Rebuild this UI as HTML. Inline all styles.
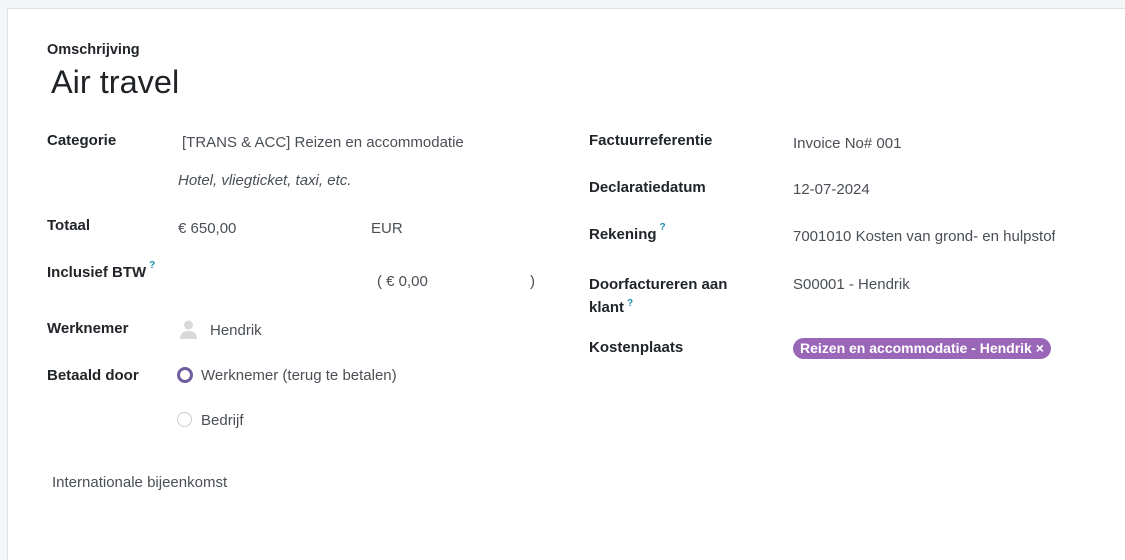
<!DOCTYPE html>
<html><head><meta charset="utf-8"><style>
html,body{margin:0;padding:0;width:1125px;height:560px;overflow:hidden;background:#f4f5f7;font-family:"Liberation Sans",sans-serif;position:relative;}
.card{position:absolute;left:7px;top:8px;width:1117px;height:552px;background:#fff;border-top:1px solid #e0e2e6;border-left:1px solid #e0e2e6;}
.a{position:absolute;white-space:nowrap;font-size:15px;}
.l{font-weight:bold;color:#212529;}
.v{color:#4a4f55;}
.q{color:#1a8fb0;font-size:10px;font-weight:bold;vertical-align:top;position:relative;top:-4px;margin-left:3px}
</style></head><body>
<div class="card"></div>
<div class="a l" style="left:47px;top:42px;font-size:14.5px;">Omschrijving</div>
<div class="a" style="left:51px;top:64px;font-size:32.5px;color:#1f2226;">Air travel</div>

<div class="a l" style="left:47px;top:132px;">Categorie</div>
<div class="a v" style="left:182px;top:134px;">[TRANS &amp; ACC] Reizen en accommodatie</div>
<div class="a v" style="left:178px;top:172px;font-style:italic;">Hotel, vliegticket, taxi, etc.</div>

<div class="a l" style="left:47px;top:217px;">Totaal</div>
<div class="a v" style="left:178px;top:220px;">€ 650,00</div>
<div class="a v" style="left:371px;top:220px;">EUR</div>

<div class="a l" style="left:47px;top:264px;">Inclusief BTW<span class="q">?</span></div>
<div class="a v" style="left:377px;top:273px;">( € 0,00</div>
<div class="a v" style="left:530px;top:273px;">)</div>

<div class="a l" style="left:47px;top:320px;">Werknemer</div>
<svg style="position:absolute;left:178px;top:318px" width="21" height="22" viewBox="0 0 21 22"><circle cx="10.5" cy="7" r="4.5" fill="#d9d9d9"/><path d="M2 21 Q2 13 10.5 13 Q19 13 19 21Z" fill="#d9d9d9"/></svg>
<div class="a v" style="left:210px;top:322px;">Hendrik</div>

<div class="a l" style="left:47px;top:367px;">Betaald door</div>
<div style="position:absolute;left:177px;top:367px;width:10px;height:10px;border:3px solid #6f5d9e;border-radius:50%;background:#fff"></div>
<div class="a v" style="left:201px;top:367px;">Werknemer (terug te betalen)</div>
<div style="position:absolute;left:177px;top:412px;width:13px;height:13px;border:1px solid #c8cbd0;border-radius:50%;background:#fff"></div>
<div class="a v" style="left:201px;top:412px;">Bedrijf</div>

<div class="a v" style="left:52px;top:474px;">Internationale bijeenkomst</div>

<div class="a l" style="left:589px;top:132px;">Factuurreferentie</div>
<div class="a v" style="left:793px;top:135px;">Invoice No# 001</div>
<div class="a l" style="left:589px;top:179px;">Declaratiedatum</div>
<div class="a v" style="left:793px;top:181px;">12-07-2024</div>
<div class="a l" style="left:589px;top:226px;">Rekening<span class="q">?</span></div>
<div class="a v" style="left:793px;top:228px;width:262px;overflow:hidden;">7001010 Kosten van grond- en hulpstoffen</div>
<div class="a l" style="left:589px;top:273px;line-height:23px;">Doorfactureren aan<br>klant<span class="q">?</span></div>
<div class="a v" style="left:793px;top:276px;">S00001 - Hendrik</div>
<div class="a l" style="left:589px;top:339px;">Kostenplaats</div>
<div class="a" style="left:793px;top:338px;height:21px;line-height:21px;padding:0 7px;background:#9a67b8;color:#fff;font-weight:bold;border-radius:11px;font-size:14px;">Reizen en accommodatie - Hendrik ×</div>
</body></html>
